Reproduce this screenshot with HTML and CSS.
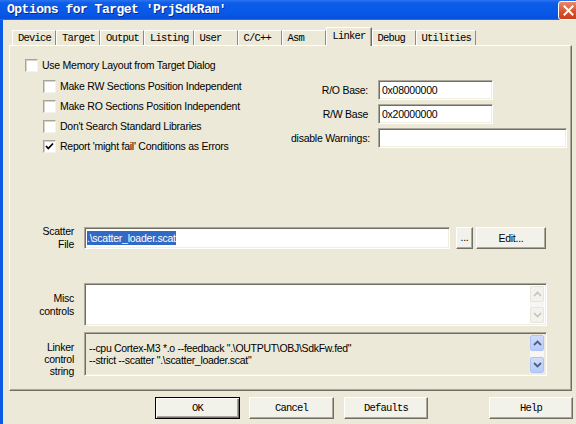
FILE: index.html
```html
<!DOCTYPE html>
<html>
<head>
<meta charset="utf-8">
<title>Options for Target</title>
<link rel="stylesheet" href="styles.css">
</head>
<body>
<div class="window">
  <div class="titlebar">
    <span class="title">Options for Target 'PrjSdkRam'</span>
    <span class="close"><svg width="11" height="11" viewBox="0 0 11 11"><path d="M1.5 1.5 L9.5 9.5 M9.5 1.5 L1.5 9.5" stroke="#fff" stroke-width="2" stroke-linecap="square"/></svg></span>
  </div>
  <div class="client">
    <div class="tabs">
      <span class="tab">Device</span>
      <span class="tab">Target</span>
      <span class="tab">Output</span>
      <span class="tab">Listing</span>
      <span class="tab">User</span>
      <span class="tab">C/C++</span>
      <span class="tab">Asm</span>
      <span class="tab active">Linker</span>
      <span class="tab">Debug</span>
      <span class="tab">Utilities</span>
    </div>
    <div class="panel">
      <div class="check top"><span class="box"></span><span>Use Memory Layout from Target Dialog</span></div>
      <div class="mid">
        <div class="sublist">
          <div class="check"><span class="box"></span><span>Make RW Sections Position Independent</span></div>
          <div class="check"><span class="box"></span><span>Make RO Sections Position Independent</span></div>
          <div class="check"><span class="box"></span><span>Don't Search Standard Libraries</span></div>
          <div class="check"><span class="box"><svg width="11" height="11" viewBox="0 0 11 11"><path d="M2 5 L4.3 7.5 L9 2.5" fill="none" stroke="#000" stroke-width="1.8"/></svg></span><span>Report 'might fail' Conditions as Errors</span></div>
        </div>
        <div class="bases">
          <span class="lbl">R/O Base:</span><span class="field short">0x08000000</span>
          <span class="lbl">R/W Base</span><span class="field short">0x20000000</span>
          <span class="lbl">disable Warnings:</span><span class="field"></span>
        </div>
      </div>
      <div class="row scatter-row">
        <div class="rlabel">Scatter<br>File</div>
        <div class="field scatter"><span class="sel">.\scatter_loader.scat</span></div>
        <span class="btn dots">...</span>
        <span class="btn edit">Edit...</span>
      </div>
      <div class="row misc-row">
        <div class="rlabel">Misc<br>controls</div>
        <div class="field area">
          <div class="area-text"></div>
          <div class="sbar">
            <span class="sbtn off"><svg width="9" height="6" viewBox="0 0 9 6"><path d="M1 5 L4.5 1.5 L8 5" fill="none" stroke="#C6C4B8" stroke-width="1.6"/></svg></span>
            <span class="sbtn off"><svg width="9" height="6" viewBox="0 0 9 6"><path d="M1 1 L4.5 4.5 L8 1" fill="none" stroke="#C6C4B8" stroke-width="1.6"/></svg></span>
          </div>
        </div>
      </div>
      <div class="row linker-row">
        <div class="rlabel tight">Linker<br>control<br>string</div>
        <div class="field area ro">
          <div class="area-text">--cpu Cortex-M3 *.o --feedback ".\OUTPUT\OBJ\SdkFw.fed"<br>--strict --scatter ".\scatter_loader.scat"</div>
          <div class="sbar">
            <span class="sbtn on"><svg width="9" height="6" viewBox="0 0 9 6"><path d="M1 5 L4.5 1.5 L8 5" fill="none" stroke="#4D6185" stroke-width="1.8"/></svg></span>
            <span class="sbtn on"><svg width="9" height="6" viewBox="0 0 9 6"><path d="M1 1 L4.5 4.5 L8 1" fill="none" stroke="#4D6185" stroke-width="1.8"/></svg></span>
          </div>
        </div>
      </div>
    </div>
    <div class="buttons">
      <span class="pbtn default">OK</span>
      <span class="pbtn cancel">Cancel</span>
      <span class="pbtn defaults">Defaults</span>
      <span class="pbtn help">Help</span>
    </div>
  </div>
</div>
</body>
</html>
```
FILE: styles.css
```css
* { box-sizing: border-box; }
html, body { margin: 0; padding: 0; }
body {
  width: 576px;
  height: 424px;
  overflow: hidden;
  background: #ECE9D8;
  font-family: "Liberation Sans", Arial, sans-serif;
  font-size: 10.5px;
  letter-spacing: -0.25px;
  color: #000;
}
.window { width: 576px; height: 424px; display: flex; flex-direction: column; }

.titlebar {
  height: 20px;
  flex: none;
  display: flex;
  align-items: flex-start;
  justify-content: space-between;
  background: linear-gradient(to bottom, #2C74F0 0, #0C5DEA 3px, #0857E6 14px, #0650DC 19px, #4F86E2 20px);
}
.title {
  font-family: "Liberation Mono", monospace;
  font-weight: bold;
  font-size: 13px;
  letter-spacing: -0.5px;
  color: #fff;
  line-height: 20px;
  padding-left: 7px;
  text-shadow: 1px 1px 0 #0A2A8A;
}
.close {
  width: 21px;
  height: 19px;
  margin-top: 1px;
  margin-right: -3px;
  border: 1px solid #fff;
  border-radius: 3px;
  background: linear-gradient(to bottom, #E9896B, #D6512B 60%, #C8401B);
  display: flex;
  align-items: center;
  justify-content: center;
}

.client {
  flex: 1;
  border-left: 3px solid #0B5AE6;
  padding-top: 10px;
  display: flex;
  flex-direction: column;
}

.tabs {
  display: flex;
  align-items: flex-end;
  height: 15px;
  margin-left: 9px;
  position: relative;
  z-index: 1;
}
.tab {
  font-family: "Liberation Mono", monospace;
  font-size: 10.5px;
  letter-spacing: -0.8px;
  height: 15px;
  line-height: 15px;
  min-width: 44px;
  padding: 0 4px 0 5px;
  border-top: 1px solid #fff;
  border-left: 1px solid #fff;
  border-right: 1px solid #8E8C80;
  white-space: nowrap;
}
.tab.active {
  height: 19px;
  line-height: 17px;
  min-width: 46px;
  margin-bottom: -1px;
  background: #ECE9D8;
  border-right: 1px solid #716F64;
  box-shadow: inset -1px 0 0 #ACA899;
  padding-left: 6px;
}

.panel {
  margin-left: 6px;
  width: 563px;
  height: 346px;
  flex: none;
  border: 1px solid;
  border-color: #fff #716F64 #716F64 #fff;
  box-shadow: inset -1px -1px 0 #ACA899;
  display: flex;
  flex-direction: column;
}

.check {
  display: flex;
  align-items: center;
  gap: 4px;
  height: 20px;
  white-space: nowrap;
}
.check.top { margin: 9px 0 0 15px; }
.box {
  width: 13px;
  height: 13px;
  flex: none;
  background: #fff;
  border: 1px solid;
  border-color: #A5A497 #F4F3EE #F4F3EE #A5A497;
  box-shadow: inset 1px 1px 0 #D6D4C8;
  display: flex;
  align-items: center;
  justify-content: center;
}

.mid {
  display: flex;
  justify-content: space-between;
  margin-right: 4px;
}
.sublist { margin: 1px 0 0 33px; }
.bases {
  display: grid;
  grid-template-columns: 77px 189px;
  grid-auto-rows: 20px;
  row-gap: 4px;
  column-gap: 10px;
  margin-top: 5px;
  align-items: center;
}
.lbl { text-align: right; white-space: nowrap; }

.field {
  background: #fff;
  height: 20px;
  border: 1px solid;
  border-color: #ACA899 #fff #fff #ACA899;
  box-shadow: inset 1px 1px 0 #716F64, inset -1px -1px 0 #F1EFE2;
  padding: 2px 3px;
  line-height: 14px;
  white-space: nowrap;
}
.field.short { width: 115px; }

.row { display: flex; align-items: flex-start; }
.rlabel {
  width: 64px;
  margin-right: 10px;
  text-align: right;
  line-height: 13px;
  flex: none;
}
.rlabel.tight { line-height: 12px; }

.scatter-row { margin-top: 71px; }
.scatter-row .rlabel { margin-top: -2px; }
.field.scatter { width: 366px; height: 22px; padding: 3px 2px; }
.sel { background: #316AC5; color: #fff; padding: 1px 0; }

.btn {
  height: 22px;
  display: flex;
  align-items: center;
  justify-content: center;
  background: #F2F1EA;
  border: 1px solid;
  border-color: #fff #716F64 #716F64 #fff;
  box-shadow: inset -1px -1px 0 #ACA899;
}
.btn.dots { width: 17px; margin-left: 6px; padding-bottom: 3px; }
.btn.edit { width: 70px; margin-left: 3px; }

.misc-row { margin-top: 32px; }
.linker-row { margin-top: 6px; }
.misc-row .rlabel, .linker-row .rlabel { margin-top: 9px; }

.field.area {
  width: 463px;
  height: 43px;
  padding: 2px 2px 2px 4px;
  display: flex;
}
.linker-row .field.area { height: 44px; }
.field.ro { background: #ECE9D8; }
.area-text {
  flex: 1;
  padding-top: 7px;
  line-height: 12px;
  letter-spacing: -0.3px;
}
.sbar {
  width: 14px;
  flex: none;
  display: flex;
  flex-direction: column;
  justify-content: space-between;
  background: #F7F6F2;
}
.sbtn {
  height: 16px;
  display: flex;
  align-items: center;
  justify-content: center;
  border: 1px solid;
  border-radius: 2px;
}
.sbtn.off { background: #F3F2EC; border-color: #E6E5DE; }
.sbtn.on { background: linear-gradient(to bottom, #D0DCFC, #B7CBF9); border-color: #AEC4F5; }

.buttons {
  display: flex;
  margin-top: 6px;
  padding-left: 152px;
}
.pbtn {
  height: 22px;
  display: flex;
  align-items: center;
  justify-content: center;
  font-family: "Liberation Mono", monospace;
  font-size: 10.5px;
  letter-spacing: -0.8px;
  background: #F2F1EA;
  border: 1px solid;
  border-color: #fff #716F64 #716F64 #fff;
  box-shadow: inset -1px -1px 0 #ACA899;
}
.pbtn.default {
  width: 85px;
  border-color: #000;
  box-shadow: inset 1px 1px 0 #fff, inset -1px -1px 0 #716F64, inset -2px -2px 0 #ACA899;
}
.pbtn.cancel { width: 85px; margin-left: 9px; }
.pbtn.defaults { width: 84px; margin-left: 10px; }
.pbtn.help { width: 84px; margin-left: auto; margin-right: 3px; }
```
